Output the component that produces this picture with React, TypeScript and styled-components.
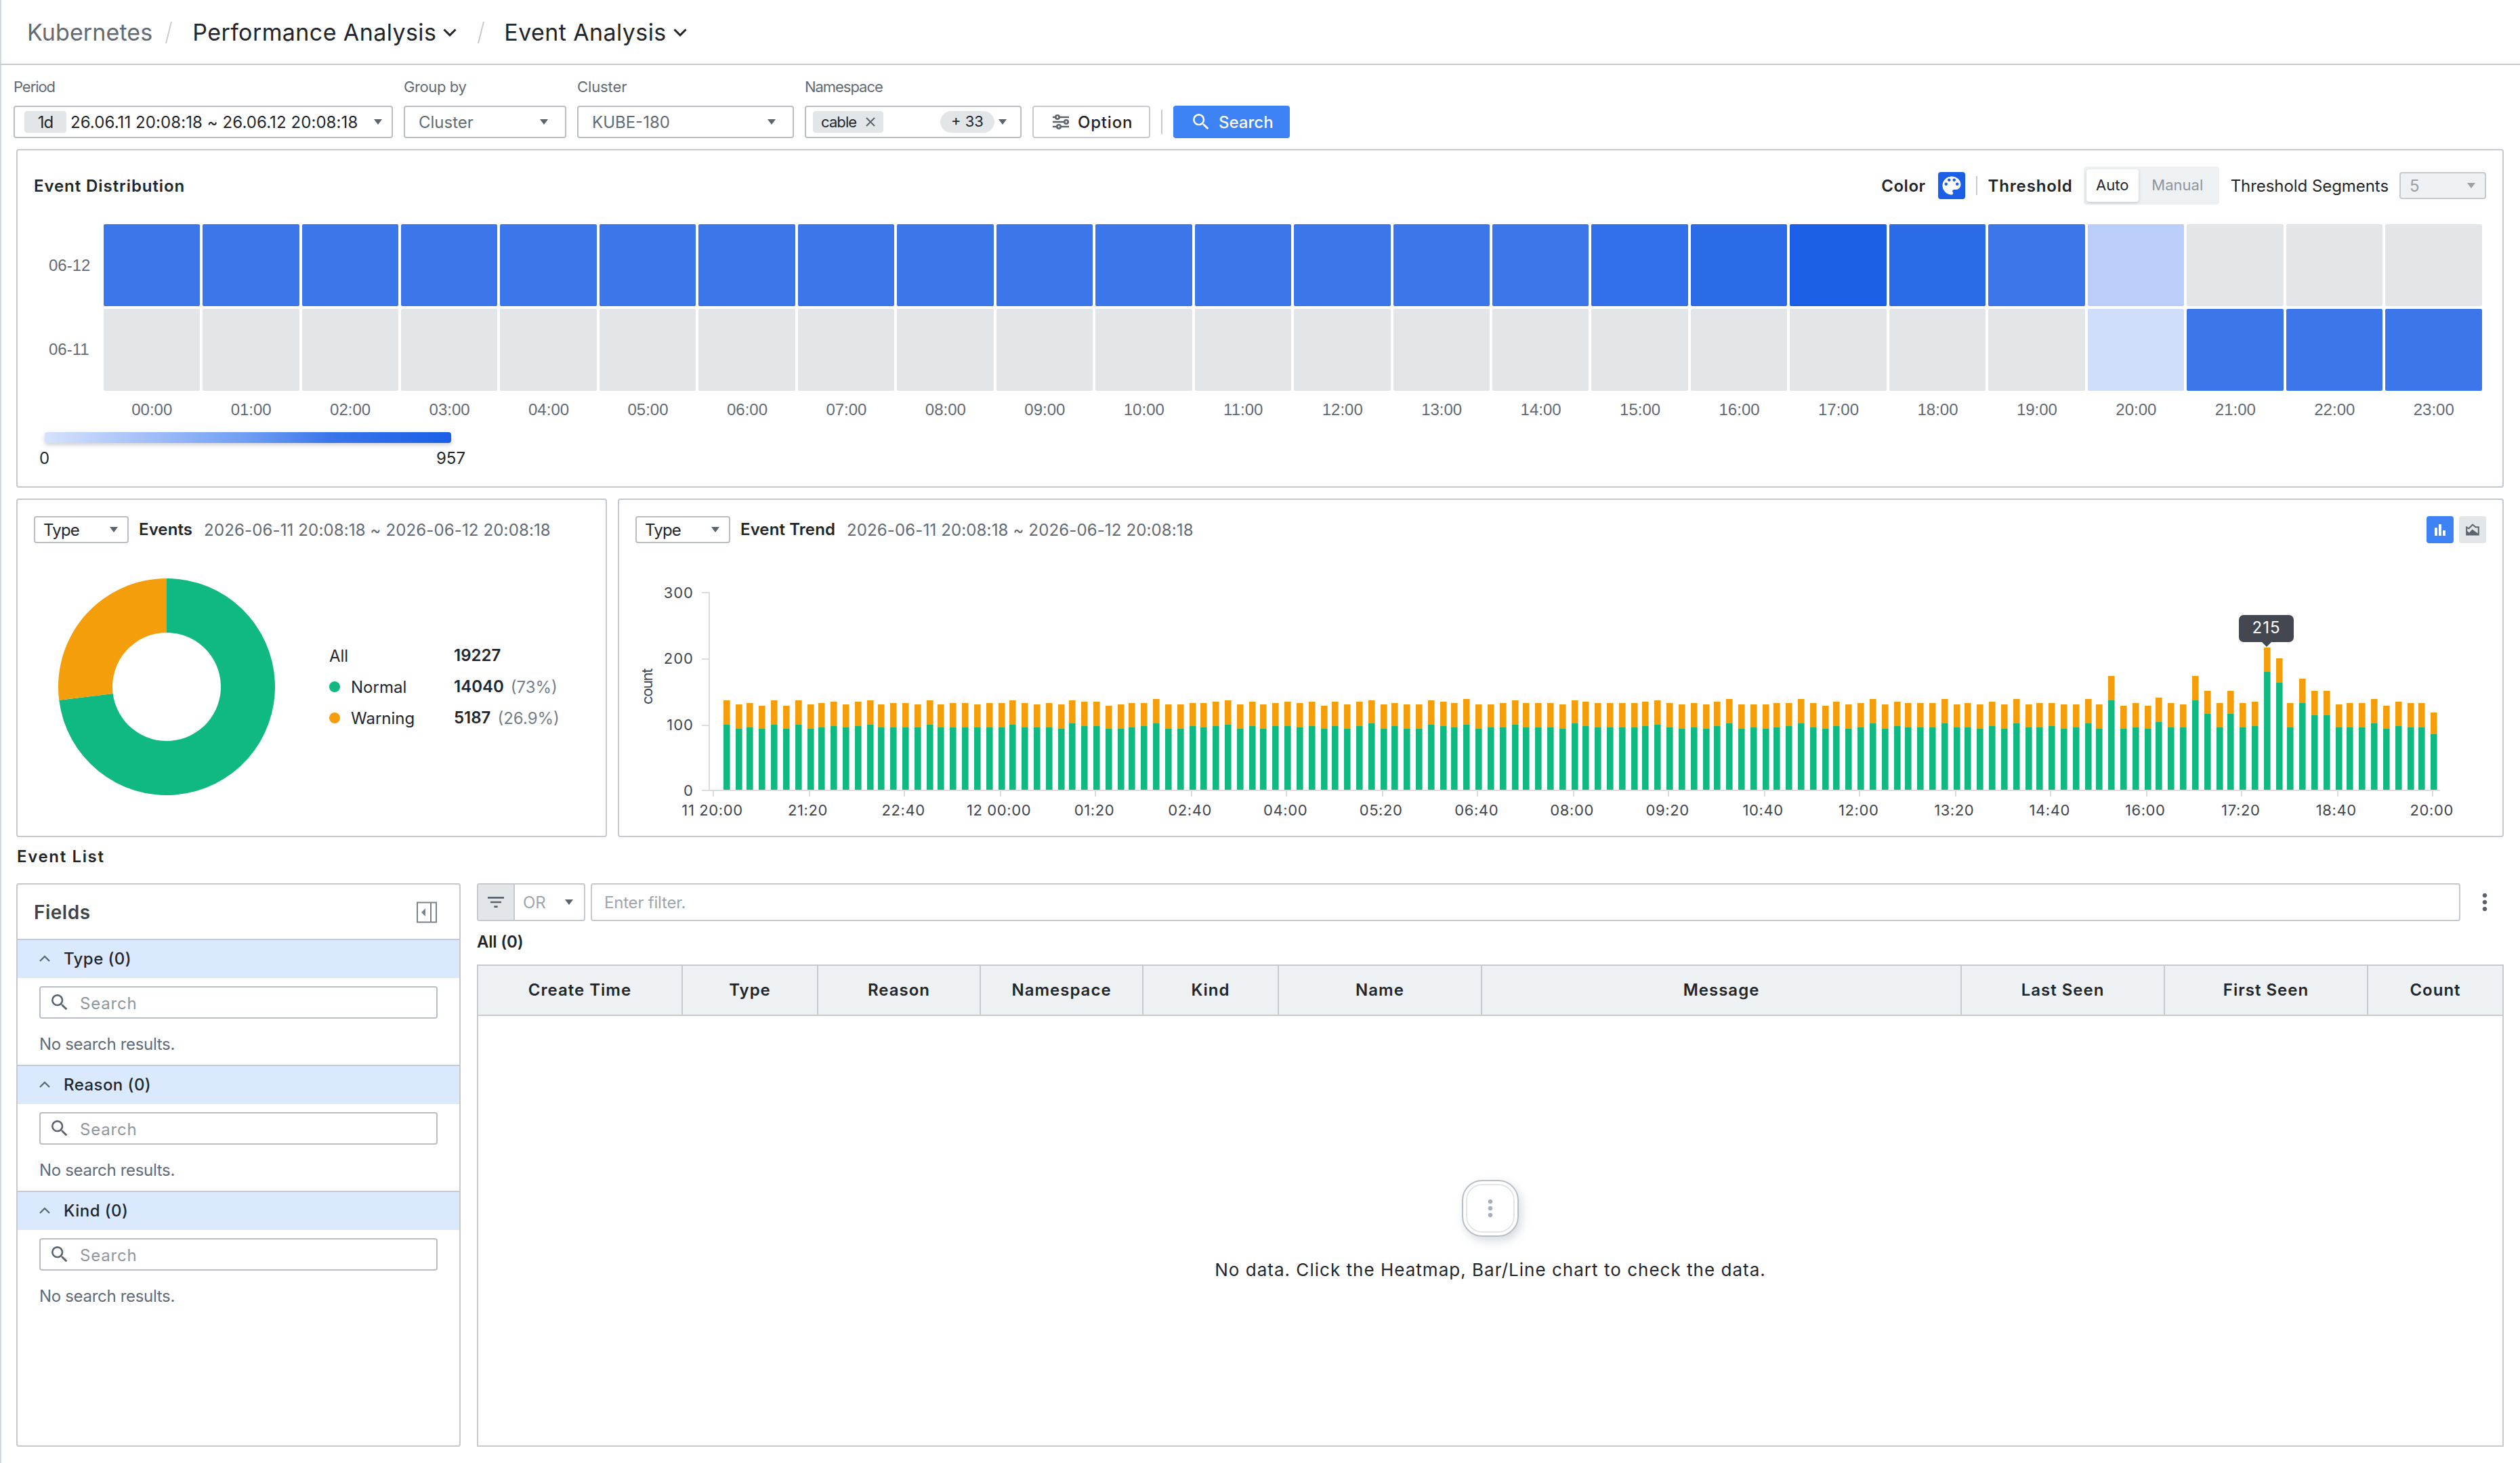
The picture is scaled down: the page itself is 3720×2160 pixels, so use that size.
import styled, { createGlobalStyle } from "styled-components";
import {
  MdColorLens,
  MdFilterList,
  MdMoreVert,
  MdSearch,
} from "react-icons/md";

const HOURS = Array.from(
  { length: 24 },
  (_, i) => `${String(i).padStart(2, "0")}:00`
);

const EMPTY = "#e2e6e9";
const BLUE = "#3b76ea";

const heatmap = [
  {
    day: "06-12",
    cells: HOURS.map((_, i) => {
      if (i === 15) return "#3270e9";
      if (i === 16) return "#2b6be8";
      if (i === 17) return "#1a5fe6";
      if (i === 18) return "#2b6be8";
      if (i === 20) return "#bbcef9";
      return i > 20 ? EMPTY : BLUE;
    }),
  },
  {
    day: "06-11",
    cells: HOURS.map((_, i) => {
      if (i === 20) return "#d1defb";
      return i > 20 ? BLUE : EMPTY;
    }),
  },
];

// [total, normal] bar heights, one per 10 minutes
const trend = (
  "66,48 63,45 64,46 62,45 66,48 62,45 66,48 63,45 64,46 65,47 63,46 65,47 " +
  "66,48 63,46 64,46 64,46 63,46 66,48 63,46 64,46 64,46 63,46 64,46 64,46 " +
  "66,48 64,46 63,46 64,46 63,45 66,49 65,47 65,47 62,45 63,45 64,46 64,47 " +
  "67,49 63,45 63,45 64,47 64,46 65,47 66,48 63,45 65,47 63,45 64,47 65,47 " +
  "64,46 65,47 62,45 65,47 63,45 65,47 66,49 63,45 64,47 63,45 63,45 66,48 " +
  "65,47 64,46 67,48 63,45 63,46 64,46 66,48 64,46 64,46 64,46 63,45 66,49 " +
  "65,47 64,46 64,46 64,46 64,46 65,47 66,48 64,46 63,45 64,46 63,45 65,47 " +
  "67,49 63,45 63,46 63,45 64,46 64,47 67,49 64,46 62,45 65,47 63,45 64,46 " +
  "67,49 63,45 65,47 64,46 64,46 64,46 67,49 63,46 64,46 63,45 65,47 63,45 " +
  "67,49 63,46 64,46 64,47 63,45 63,46 67,49 63,45 84,66 62,45 64,46 62,45 " +
  "68,50 64,46 63,46 84,66 73,56 64,46 73,56 64,46 65,47 105,87 97,79 64,46 " +
  "82,64 73,55 73,55 63,46 64,46 64,46 67,49 62,45 65,47 64,46 64,46 57,41"
)
  .split(" ")
  .map((p) => p.split(",").map(Number));

const timeTicks = [
  "11 20:00",
  "21:20",
  "22:40",
  "12 00:00",
  "01:20",
  "02:40",
  "04:00",
  "05:20",
  "06:40",
  "08:00",
  "09:20",
  "10:40",
  "12:00",
  "13:20",
  "14:40",
  "16:00",
  "17:20",
  "18:40",
  "20:00",
];

const columns: [string, number][] = [
  ["Create Time", 302],
  ["Type", 200],
  ["Reason", 240],
  ["Namespace", 240],
  ["Kind", 200],
  ["Name", 300],
  ["Message", 708],
  ["Last Seen", 300],
  ["First Seen", 300],
  ["Count", 198],
];

const RANGE = "2026-06-11 20:08:18 ~ 2026-06-12 20:08:18";

const ChevronDown = () => (
  <svg width="20" height="12" viewBox="0 0 20 12" fill="none">
    <path d="M1.5 1.5L10 10l8.5-8.5" stroke="#22262b" strokeWidth="3" />
  </svg>
);

const ChevronUp = () => (
  <svg width="16" height="10" viewBox="0 0 16 10" fill="none">
    <path d="M1 9l7-7 7 7" stroke="#5b636c" strokeWidth="2.2" />
  </svg>
);

const CloseIcon = () => (
  <svg width="14" height="14" viewBox="0 0 14 14" fill="none">
    <path d="M1 1l12 12M13 1L1 13" stroke="#5b636c" strokeWidth="2" />
  </svg>
);

const TuneIcon = () => (
  <svg width="24" height="22" viewBox="0 0 24 22" fill="none">
    <g stroke="#5b636c" strokeWidth="2.6">
      <path d="M0 4h4M10 4h14M0 11h17M23 11h1M0 18h6M12 18h12" />
      <circle cx="7" cy="4" r="2.7" />
      <circle cx="20" cy="11" r="2.7" />
      <circle cx="9" cy="18" r="2.7" />
    </g>
  </svg>
);

const CollapseIcon = () => (
  <svg width="30" height="32" viewBox="0 0 30 32" fill="none">
    <rect x="1" y="1.5" width="28" height="29" stroke="#7b838b" strokeWidth="2" />
    <path d="M21 1v30" stroke="#7b838b" strokeWidth="2" />
    <path d="M13 10v12l-6-6z" fill="#7b838b" />
  </svg>
);

const BarIcon = () => (
  <svg width="16" height="17" viewBox="0 0 16 17" fill="#fff">
    <path d="M0 5h4v12H0zM6 0h4v17H6zM12 9h4v8h-4z" />
  </svg>
);

const AreaIcon = () => (
  <svg width="20" height="18" viewBox="0 0 20 18" fill="none">
    <path
      d="M1.2 16.5V5.5l3.3 1.8 5.5-5.8 4.5 3.7h4.3v11.3z"
      stroke="#5b636c"
      strokeWidth="2"
    />
    <path d="M1 10l4 3.500 4.500-5 9 6.500V17H1z" fill="#5b636c" />
  </svg>
);

const donut = (from: number, to: number) => {
  const at = (f: number, r: number) => {
    const a = f * Math.PI * 2;
    return `${160 + r * Math.sin(a)} ${160 - r * Math.cos(a)}`;
  };
  const large = to - from > 0.5 ? 1 : 0;
  return `M${at(from, 160)}A160 160 0 ${large} 1 ${at(to, 160)}L${at(
    to,
    80
  )}A80 80 0 ${large} 0 ${at(from, 80)}Z`;
};

const TrendChart = () => (
  <svg width="2780" height="340" viewBox="0 0 2780 340">
    {trend.map(([total, normal], i) => {
      const x = Math.floor(534.32 + 8.8137 * i) * 2 - 914;
      return (
        <g key={i}>
          <rect x={x} y={312 - total * 2} width="9.6" height={(total - normal) * 2} fill="#f59e0b" />
          <rect x={x} y={312 - normal * 2} width="9.6" height={normal * 2} fill="#10b981" />
        </g>
      );
    })}
    <g fill="#dcdcdc">
      <rect x="132" y="20" width="2" height="294" />
      <rect x="122" y="312" width="2566" height="2" />
      {[20, 118, 216].map((y) => (
        <rect key={y} x="122" y={y} width="12" height="2" />
      ))}
      {timeTicks.map((t, i) => (
        <rect key={t} x={Math.floor(526.5 + 70.51 * i) * 2 - 914} y="314" width="2" height="8" />
      ))}
    </g>
  </svg>
);

const App = () => (
  <>
    <GlobalStyle />
    <Page>
      <Header>
        <Crumb $muted>Kubernetes</Crumb>
        <Slash $left={19} $right={34} />
        <Crumb>Performance Analysis</Crumb>
        <CrumbArrow>
          <ChevronDown />
        </CrumbArrow>
        <Slash $left={31} $right={33} />
        <Crumb>Event Analysis</Crumb>
        <CrumbArrow>
          <ChevronDown />
        </CrumbArrow>
      </Header>

      <Toolbar>
        <Field $width={560}>
          <FieldLabel $spacing={-1.06}>Period</FieldLabel>
          <Select $pad={6}>
            <Tag>1d</Tag>
            <Value $dark>26.06.11 20:08:18 ~ 26.06.12 20:08:18</Value>
            <Caret $right={14} />
          </Select>
        </Field>
        <Field $width={240}>
          <FieldLabel $spacing={-0.4}>Group by</FieldLabel>
          <Select $pad={20}>
            <Value>Cluster</Value>
            <Caret $right={25} />
          </Select>
        </Field>
        <Field $width={320}>
          <FieldLabel $spacing={-0.1}>Cluster</FieldLabel>
          <Select $pad={20}>
            <Value>KUBE-180</Value>
            <Caret $right={25} />
          </Select>
        </Field>
        <Field $width={320}>
          <FieldLabel $spacing={-1.04}>Namespace</FieldLabel>
          <Select $pad={10}>
            <Chip>
              cable
              <CloseIcon />
            </Chip>
            <CountPill>+ 33</CountPill>
            <Caret $right={20} $tight />
          </Select>
        </Field>
        <OptionButton>
          <TuneIcon />
          Option
        </OptionButton>
        <Divider $height={36} />
        <SearchButton>
          <MdSearch size={32} />
          Search
        </SearchButton>
      </Toolbar>

      <Content>
        <Card $height={500}>
          <CardHead $tall>
            <CardTitle>Event Distribution</CardTitle>
            <Controls>
              <CardTitle $spacing={0.5}>Color</CardTitle>
              <ColorButton>
                <MdColorLens size={36} />
              </ColorButton>
              <Divider $height={28} />
              <CardTitle $spacing={0.85}>Threshold</CardTitle>
              <Toggle>
                <ToggleItem $active>Auto</ToggleItem>
                <ToggleItem>Manual</ToggleItem>
              </Toggle>
              <SegmentsLabel>Threshold Segments</SegmentsLabel>
              <SegmentsSelect>
                5
                <Caret $right={14} $color="#9aa0a6" />
              </SegmentsSelect>
            </Controls>
          </CardHead>
          <Heatmap>
            {heatmap.map((row) => (
              <HeatRow key={row.day}>
                <DayLabel>{row.day}</DayLabel>
                <HeatGrid>
                  {row.cells.map((color, i) => (
                    <Cell key={i} $color={color} />
                  ))}
                </HeatGrid>
              </HeatRow>
            ))}
            <HourRow>
              {HOURS.map((h) => (
                <span key={h}>{h}</span>
              ))}
            </HourRow>
          </Heatmap>
          <Legend>
            <LegendBar />
            <LegendScale>
              <span>0</span>
              <span>957</span>
            </LegendScale>
          </Legend>
        </Card>

        <CardRow>
          <Card $height={500} $width={872}>
            <CardHead>
              <TypeSelect>
                Type
                <Caret $right={14} />
              </TypeSelect>
              <ChartTitle>Events</ChartTitle>
              <Range>{RANGE}</Range>
            </CardHead>
            <DonutRow>
              <svg width="320" height="320" viewBox="0 0 320 320">
                <path d={donut(0, 0.7302)} fill="#10b981" />
                <path d={donut(0.7302, 1)} fill="#f59e0b" />
              </svg>
              <Stats>
                <Stat>
                  <StatName>All</StatName>
                  <StatValue>19227</StatValue>
                </Stat>
                <Stat>
                  <StatName>
                    <Dot $color="#10b981" />
                    Normal
                  </StatName>
                  <StatValue>14040</StatValue>
                  <Percent>(73%)</Percent>
                </Stat>
                <Stat>
                  <StatName>
                    <Dot $color="#f59e0b" />
                    Warning
                  </StatName>
                  <StatValue>5187</StatValue>
                  <Percent>(26.9%)</Percent>
                </Stat>
              </Stats>
            </DonutRow>
          </Card>

          <Card $height={500} $width={2784}>
            <CardHead>
              <TypeSelect>
                Type
                <Caret $right={14} />
              </TypeSelect>
              <ChartTitle>Event Trend</ChartTitle>
              <Range>{RANGE}</Range>
              <Controls $gap={8}>
                <IconButton $active>
                  <BarIcon />
                </IconButton>
                <IconButton>
                  <AreaIcon />
                </IconButton>
              </Controls>
            </CardHead>
            <Chart>
              <TrendChart />
              <AxisName>count</AxisName>
              <ValueAxis>
                <span>300</span>
                <span>200</span>
                <span>100</span>
                <span>0</span>
              </ValueAxis>
              <TimeAxis>
                {timeTicks.map((t) => (
                  <span key={t}>{t}</span>
                ))}
              </TimeAxis>
              <Tooltip>215</Tooltip>
            </Chart>
          </Card>
        </CardRow>

        <SectionTitle>Event List</SectionTitle>

        <ListRow>
          <FieldsPanel>
            <FieldsHead>
              Fields
              <CollapseIcon />
            </FieldsHead>
            {["Type (0)", "Reason (0)", "Kind (0)"].map((name) => (
              <FieldGroup key={name}>
                <GroupHead>
                  <ChevronUp />
                  {name}
                </GroupHead>
                <SearchBox>
                  <MdSearch size={32} />
                  <Placeholder>Search</Placeholder>
                </SearchBox>
                <NoResult>No search results.</NoResult>
              </FieldGroup>
            ))}
          </FieldsPanel>

          <ListMain>
            <FilterRow>
              <FilterMode>
                <FilterIcon>
                  <MdFilterList size={32} />
                </FilterIcon>
                OR
                <Caret $right={16} />
              </FilterMode>
              <FilterInput>Enter filter.</FilterInput>
              <MdMoreVert size={40} />
            </FilterRow>
            <Total>All (0)</Total>
            <Table>
              <TableHead>
                {columns.map(([name, width]) => (
                  <Column key={name} $width={width}>
                    {name}
                  </Column>
                ))}
              </TableHead>
              <NoData>
                <NoDataIcon>
                  <MdMoreVert size={40} />
                </NoDataIcon>
                No data. Click the Heatmap, Bar/Line chart to check the data.
              </NoData>
            </Table>
          </ListMain>
        </ListRow>
      </Content>
    </Page>
  </>
);

export default App;

const GlobalStyle = createGlobalStyle`
  * {
    box-sizing: border-box;
  }

  body {
    margin: 0;
    background: #fff;
    color: #22262b;
    font-family: Inter, "Noto Sans", sans-serif;
    font-size: 24px;
  }

  svg {
    display: block;
    flex: none;
  }
`;

const Page = styled.main`
  display: flex;
  flex-direction: column;
  width: 3720px;
  height: 2160px;
  overflow: hidden;
  white-space: nowrap;
  box-shadow: inset 4px 0 3px -3px rgba(60, 80, 90, 0.4);
`;

const Header = styled.header`
  display: flex;
  align-items: center;
  height: 96px;
  padding: 1px 0 0 40px;
  border-bottom: 2px solid #c6cad0;
`;

const Crumb = styled.span<{ $muted?: boolean }>`
  font-size: 34px;
  letter-spacing: ${({ $muted }) => ($muted ? 0.1 : 0.4)}px;
  color: ${({ $muted }) => ($muted ? "#626a74" : "#22262b")};
`;

const CrumbArrow = styled.span`
  margin: 1px 0 0 10px;
`;

const Slash = styled.i<{ $left: number; $right: number }>`
  width: 2px;
  height: 32px;
  margin: 0 ${({ $right }) => $right}px 0 ${({ $left }) => $left + 4}px;
  background: #c6cad0;
  transform: skewX(-14deg);
`;

const Toolbar = styled.section`
  display: flex;
  align-items: flex-end;
  height: 108px;
  padding-left: 20px;
`;

const Field = styled.div<{ $width: number }>`
  width: ${({ $width }) => $width}px;
  margin-right: 16px;
`;

const FieldLabel = styled.div<{ $spacing: number }>`
  margin-bottom: 15px;
  font-size: 22px;
  line-height: 26px;
  letter-spacing: ${({ $spacing }) => $spacing}px;
  color: #626a74;
`;

const Select = styled.div<{ $pad: number }>`
  display: flex;
  align-items: center;
  height: 48px;
  padding-left: ${({ $pad }) => $pad}px;
  border: 2px solid #b9bfc5;
  border-radius: 4px;
`;

const Caret = styled.i<{ $right: number; $tight?: boolean; $color?: string }>`
  margin-left: ${({ $tight }) => ($tight ? "6px" : "auto")};
  margin-right: ${({ $right }) => $right}px;
  border: 6px solid transparent;
  border-top: 8px solid ${({ $color }) => $color || "#5b636c"};
  border-bottom: 0;
`;

const Value = styled.span<{ $dark?: boolean }>`
  letter-spacing: ${({ $dark }) => ($dark ? 0.08 : 0)}px;
  color: ${({ $dark }) => ($dark ? "#22262b" : "#626a74")};
`;

const Tag = styled.span`
  width: 62px;
  height: 32px;
  margin: 0 6px 0 8px;
  border-radius: 4px;
  background: #e2e6e9;
  line-height: 33px;
  letter-spacing: -1px;
  text-align: center;
`;

const Chip = styled.span`
  display: flex;
  align-items: center;
  gap: 14px;
  width: 104px;
  height: 32px;
  padding-left: 12px;
  border-radius: 4px;
  background: #e2e6e9;
  font-size: 22px;
  letter-spacing: -0.9px;
`;

const CountPill = styled.span`
  width: 80px;
  height: 32px;
  margin-left: auto;
  border-radius: 16px;
  background: #e2e6e9;
  font-size: 22px;
  line-height: 31px;
  text-align: center;
`;

const OptionButton = styled.button`
  display: flex;
  align-items: center;
  gap: 13px;
  width: 174px;
  height: 48px;
  padding: 0 0 0 28px;
  border: 2px solid #c6cad0;
  border-radius: 4px;
  background: #fff;
  color: #22262b;
  font: 500 24px Inter, sans-serif;
  letter-spacing: 0.8px;
`;

const Divider = styled.i<{ $height: number }>`
  width: 2px;
  height: ${({ $height }) => $height}px;
  margin: 0 16px;
  background: #c6cad0;

  ${Toolbar} & {
    margin-bottom: 6px;
  }
`;

const SearchButton = styled.button`
  display: flex;
  align-items: center;
  gap: 10px;
  width: 172px;
  height: 48px;
  padding: 0 0 0 25px;
  border: 0;
  border-radius: 4px;
  background: #3e83f6;
  color: #fff;
  font: 500 24px Inter, sans-serif;
`;

const Content = styled.div`
  display: flex;
  flex-direction: column;
  flex: 1;
  padding: 16px 24px 24px;
`;

const Card = styled.section<{ $height: number; $width?: number }>`
  width: ${({ $width }) => ($width ? `${$width}px` : "auto")};
  height: ${({ $height }) => $height}px;
  padding: 24px;
  border: 2px solid #c6cad0;
  border-radius: 4px;
`;

const CardRow = styled.div`
  display: flex;
  gap: 16px;
  margin-top: 16px;
`;

const CardHead = styled.div<{ $tall?: boolean }>`
  display: flex;
  align-items: center;
  height: ${({ $tall }) => ($tall ? 56 : 40)}px;
`;

const CardTitle = styled.h2<{ $spacing?: number }>`
  margin: 0;
  font-size: 24px;
  font-weight: 600;
  letter-spacing: ${({ $spacing = 0.92 }) => $spacing}px;
`;

const Controls = styled.div<{ $gap?: number }>`
  display: flex;
  align-items: center;
  gap: ${({ $gap = 0 }) => $gap}px;
  margin-left: auto;
`;

const ColorButton = styled.button`
  display: flex;
  align-items: center;
  justify-content: center;
  width: 40px;
  height: 40px;
  margin-left: 18px;
  padding: 0;
  border: 0;
  border-radius: 4px;
  background: #1a5fe6;
  color: #fff;
`;

const Toggle = styled.div`
  display: flex;
  width: 200px;
  height: 56px;
  margin: 0 17px 0 16px;
  padding: 4px;
  border-radius: 4px;
  background: #edf1f4;
`;

const ToggleItem = styled.span<{ $active?: boolean }>`
  width: ${({ $active }) => ($active ? 78 : 116)}px;
  height: 48px;
  border-radius: 4px;
  background: ${({ $active }) => ($active ? "#fff" : "none")};
  box-shadow: ${({ $active }) =>
    $active ? "0 2px 4px rgba(90, 100, 110, 0.25)" : "none"};
  color: ${({ $active }) => ($active ? "#22262b" : "#8f969d")};
  font-size: 22px;
  line-height: 46px;
  text-align: center;
`;

const SegmentsLabel = styled.span`
  margin-right: 16px;
  letter-spacing: -0.06px;
`;

const SegmentsSelect = styled.div`
  display: flex;
  align-items: center;
  width: 128px;
  height: 40px;
  padding-left: 13px;
  border: 2px solid #c6cad0;
  border-radius: 4px;
  background: #edf1f4;
  color: #9aa0a6;
`;

const Heatmap = styled.div`
  display: flex;
  flex-direction: column;
  gap: 4px;
  margin-top: 29.3px;
  font-family: "Liberation Sans", sans-serif;
  color: #626a74;
`;

const HeatRow = styled.div`
  display: flex;
  align-items: center;
  height: 120.8px;
`;

const DayLabel = styled.span`
  width: 102.6px;
  padding-left: 22px;
`;

const HeatGrid = styled.div`
  display: grid;
  grid-template-columns: repeat(24, 1fr);
  gap: 4px;
  width: 3511px;
  height: 100%;
`;

const Cell = styled.span<{ $color: string }>`
  border-radius: 2px;
  background: ${({ $color }) => $color};
`;

const HourRow = styled.div`
  display: grid;
  grid-template-columns: repeat(24, 1fr);
  width: 3515px;
  margin: 10px 0 0 101px;
  text-align: center;
`;

const Legend = styled.div`
  width: 600px;
  margin: 19px 0 0 16px;
`;

const LegendBar = styled.div`
  height: 16px;
  border-radius: 4px;
  background: linear-gradient(90deg, #d6e2fc, #6f9df3 50%, #3b76ea 70%, #1a5fe6);
  box-shadow: 0 3px 6px rgba(90, 100, 120, 0.3);
`;

const LegendScale = styled.div`
  display: flex;
  justify-content: space-between;
  margin: 8px -21px 0 -8px;
`;

const TypeSelect = styled.div`
  display: flex;
  align-items: center;
  width: 140px;
  height: 40px;
  padding-left: 12px;
  border: 2px solid #b9bfc5;
  border-radius: 4px;
  letter-spacing: -0.8px;
`;

const ChartTitle = styled.h3`
  margin: 0 17px 2px 15px;
  font-size: 24px;
  font-weight: 600;
  letter-spacing: 0.1px;
`;

const Range = styled.span`
  letter-spacing: 0.14px;
  color: #626a74;
`;

const IconButton = styled.button<{ $active?: boolean }>`
  display: flex;
  align-items: center;
  justify-content: center;
  width: 40px;
  height: 40px;
  padding: 0;
  border: 0;
  border-radius: 4px;
  background: ${({ $active }) => ($active ? "#3e83f6" : "#e2e6e9")};
`;

const DonutRow = styled.div`
  display: flex;
  align-items: center;
  margin: 52px 0 0 36px;
`;

const Stats = styled.div`
  display: flex;
  flex-direction: column;
  margin-left: 80px;
`;

const Stat = styled.div`
  display: flex;
  align-items: center;
  height: 46px;
`;

const StatName = styled.span`
  display: flex;
  align-items: center;
  width: 184px;
`;

const Dot = styled.i<{ $color: string }>`
  width: 16px;
  height: 16px;
  margin-right: 16px;
  border-radius: 50%;
  background: ${({ $color }) => $color};
`;

const StatValue = styled.b`
  margin-bottom: 2px;
  font-weight: 600;
`;

const Percent = styled.span`
  margin-left: 10px;
  color: #757d87;
`;

const Chart = styled.div`
  position: relative;
  width: 2780px;
  height: 410px;
  margin: 52px 0 0 -24px;
  font-size: 22px;
  color: #3f454d;
`;

const AxisName = styled.span`
  position: absolute;
  left: 41px;
  top: 160px;
  transform: translate(-50%, -50%) rotate(-90deg);
  letter-spacing: -1.4px;
`;

const ValueAxis = styled.div`
  position: absolute;
  left: 29px;
  top: 7px;
  display: flex;
  flex-direction: column;
  justify-content: space-between;
  width: 81px;
  height: 320px;
  text-align: right;
  line-height: 28px;
  letter-spacing: 1px;
`;

const TimeAxis = styled.div`
  position: absolute;
  left: 67px;
  top: 329px;
  display: grid;
  grid-template-columns: repeat(19, 141.02px);
  text-align: center;
  letter-spacing: 0.6px;
`;

const Tooltip = styled.div`
  position: absolute;
  left: 2391px;
  top: 54px;
  width: 81px;
  height: 40px;
  border-radius: 7px;
  background: #434850;
  color: #fff;
  font-size: 24px;
  line-height: 38px;
  letter-spacing: 1px;
  text-align: center;

  &::after {
    content: "";
    position: absolute;
    left: 33px;
    top: 39px;
    border: 8px solid transparent;
    border-top-color: #434850;
    border-bottom: 0;
  }
`;

const SectionTitle = styled.h2`
  margin: 14px 0 0 1px;
  font-size: 24px;
  font-weight: 600;
  line-height: 30px;
  letter-spacing: 1.65px;
`;

const ListRow = styled.div`
  display: flex;
  flex: 1;
  gap: 24px;
  margin-top: 24px;
`;

const FieldsPanel = styled.aside`
  width: 656px;
  border: 2px solid #c6cad0;
  border-radius: 4px;
`;

const FieldsHead = styled.div`
  display: flex;
  align-items: center;
  justify-content: space-between;
  height: 80px;
  padding: 1px 33px 0 24px;
  font-size: 28px;
  font-weight: 600;
  letter-spacing: 0.5px;
  color: #3f444b;
`;

const FieldGroup = styled.div`
  height: 186px;
  border-top: 2px solid #c6cad0;
`;

const GroupHead = styled.div`
  display: flex;
  align-items: center;
  gap: 20px;
  height: 56px;
  padding: 0 0 2px 32px;
  background: #dbe9fe;
  font-weight: 500;
  letter-spacing: 0.45px;
`;

const SearchBox = styled.div`
  display: flex;
  align-items: center;
  gap: 14px;
  height: 48px;
  margin: 14px 32px 0;
  margin-top: 12px;
  padding-left: 12px;
  border: 2px solid #b9bfc5;
  border-radius: 4px;
  color: #5b636c;
`;

const Placeholder = styled.span`
  padding-top: 2px;
  letter-spacing: 0.8px;
  color: #8f969d;
`;

const NoResult = styled.div`
  margin: 23px 0 0 32px;
  letter-spacing: -0.32px;
  color: #626a74;
`;

const ListMain = styled.div`
  display: flex;
  flex-direction: column;
  width: 2992px;
`;

const FilterRow = styled.div`
  display: flex;
  align-items: center;
  height: 56px;
  color: #5b636c;

  > svg {
    margin-left: 16px;
  }
`;

const FilterMode = styled.div`
  display: flex;
  align-items: center;
  width: 160px;
  height: 56px;
  border: 2px solid #c6cad0;
  border-radius: 4px;
  color: #a0a5ab;
`;

const FilterIcon = styled.span`
  display: flex;
  align-items: center;
  justify-content: center;
  width: 54px;
  height: 52px;
  margin-right: 12px;
  border-right: 2px solid #c6cad0;
  background: #e2e6e9;
  color: #5b636c;
`;

const FilterInput = styled.div`
  width: 2760px;
  height: 56px;
  margin-left: 8px;
  padding-left: 18px;
  border: 2px solid #c6cad0;
  border-radius: 4px;
  line-height: 53px;
  letter-spacing: -0.2px;
  color: #a0a5ab;
`;

const Total = styled.div`
  height: 64px;
  font-weight: 600;
  line-height: 61px;
  letter-spacing: -0.2px;
`;

const Table = styled.div`
  display: flex;
  flex-direction: column;
  flex: 1;
  border: 2px solid #c6cad0;
`;

const TableHead = styled.div`
  display: flex;
  height: 74px;
  border-bottom: 2px solid #c6cad0;
  background: #edf1f4;
`;

const Column = styled.div<{ $width: number }>`
  width: ${({ $width }) => $width}px;
  border-right: 2px solid #c6cad0;
  font-weight: 600;
  line-height: 71px;
  letter-spacing: 1px;
  text-align: center;

  &:last-child {
    border-right: 0;
  }
`;

const NoData = styled.div`
  display: flex;
  flex-direction: column;
  align-items: center;
  padding-top: 242px;
  font-size: 26px;
  letter-spacing: 1.02px;
`;

const NoDataIcon = styled.div`
  display: flex;
  align-items: center;
  justify-content: center;
  width: 84px;
  height: 84px;
  margin-bottom: 33px;
  border: 2px solid #b9bfc5;
  border-radius: 30px;
  box-shadow: 4px 6px 14px rgba(110, 125, 145, 0.28),
    inset 0 0 0 4px #fff, inset 0 0 0 6px #e2e6e9;
  color: #a9afb6;
`;
